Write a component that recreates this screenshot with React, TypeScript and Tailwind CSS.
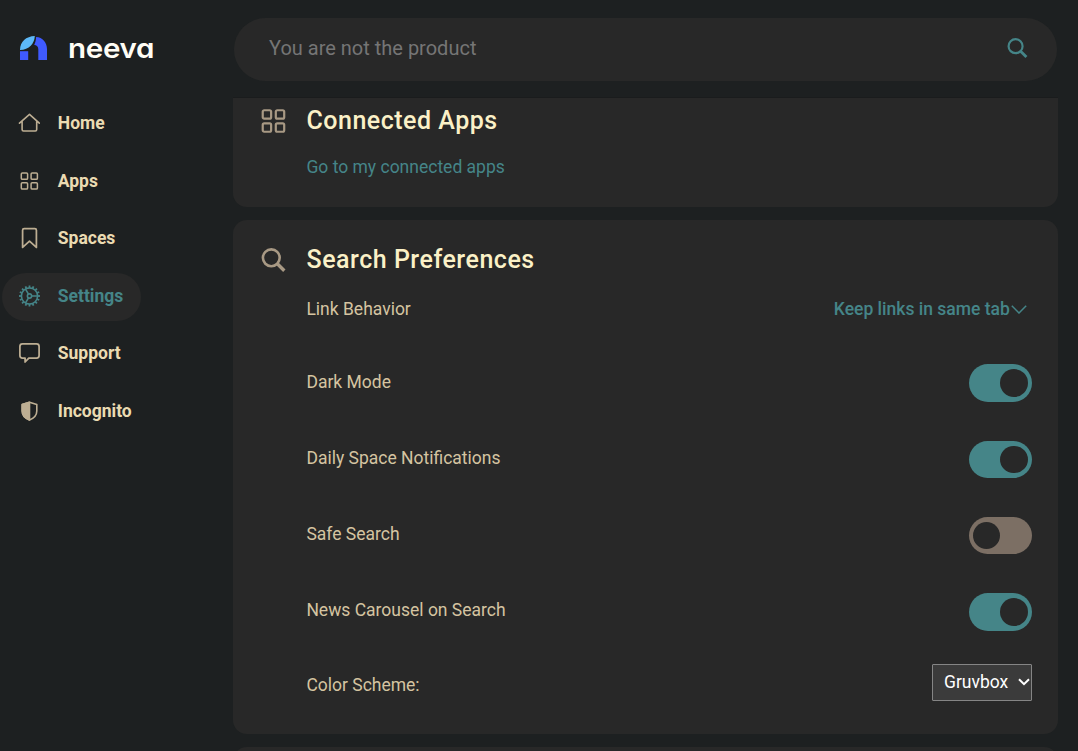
import React from "react";

type IconProps = { className?: string };

function Logo() {
  return (
    <svg className="h-6 w-[27px] shrink-0" viewBox="0 0 27 24" fill="none">
      <path d="M0 14C0 5.5 6 .4 14.8 0C14.5 7.5 9.2 14 0 14Z" fill="#5db9f8" />
      <path d="M0 15.2H8.2V24H0Z" fill="#3f5aff" />
      <path d="M16.1 .9C22.6 1.3 27 6.2 27 13V24H18.3V13.2C18.3 10.6 16.8 9 14.2 8.9C15.4 6.4 16 3.8 16.1 .9Z" fill="#3f5aff" />
    </svg>
  );
}

function HomeIcon() {
  return (
    <svg className="size-[22px]" viewBox="0 0 22 22" fill="none" stroke="currentColor" strokeWidth="1.6" strokeLinecap="round" strokeLinejoin="round">
      <path d="M1.5 11.2L11.5 2.3L21.3 11.2M4.1 9.4V17.6Q4.1 19 5.5 19H17.3Q18.7 19 18.7 17.6V9.4" />
    </svg>
  );
}

function GridIcon({ className, strokeWidth = 1.65 }: IconProps & { strokeWidth?: number }) {
  return (
    <svg className={className} viewBox="-.35 0 18 18" overflow="visible" fill="none" stroke="currentColor" strokeWidth={strokeWidth}>
      <rect x=".95" y=".95" width="6.3" height="6.3" rx="1.1" />
      <rect x="10.75" y=".95" width="6.3" height="6.3" rx="1.1" />
      <rect x=".95" y="10.75" width="6.3" height="6.3" rx="1.1" />
      <rect x="10.75" y="10.75" width="6.3" height="6.3" rx="1.1" />
    </svg>
  );
}

function BookmarkIcon() {
  return (
    <svg className="size-[22px]" viewBox="0 0 22 22" fill="none" stroke="currentColor" strokeWidth="1.75" strokeLinejoin="round">
      <path d="M4.6 20.4V3.2Q4.6 1.6 6.2 1.6H16.8Q18.4 1.6 18.4 3.2V20.4L11.5 14.2Z" />
    </svg>
  );
}

function GearIcon() {
  const teeth = Array.from({ length: 16 }, (_, i) => i * 22.5);
  return (
    <svg className="size-[22px]" viewBox="-.5 0 22 22" fill="none" stroke="currentColor" strokeWidth="1.6">
      <circle cx="11" cy="11" r="8.1" />
      <circle cx="11" cy="11" r="2.1" />
      {teeth.map((a) => (
        <path key={a} d="M11 .5V2.6" strokeWidth="1.8" transform={`rotate(${a} 11 11)`} />
      ))}
      <path d="M13 11H19M10 9.2L7 4.1M10 12.8L7 17.9" />
    </svg>
  );
}

function ChatIcon() {
  return (
    <svg className="size-[22px]" viewBox="-.5 0 22 22" fill="none" stroke="currentColor" strokeWidth="1.75" strokeLinejoin="round">
      <path d="M4 1.9H18Q20.6 1.9 20.6 4.5V13.6Q20.6 16.2 18 16.2H10.3L6.6 20V16.2H4Q1.4 16.2 1.4 13.6V4.5Q1.4 1.9 4 1.9Z" />
    </svg>
  );
}

function ShieldIcon() {
  return (
    <svg className="size-[22px]" viewBox="-.5 0 22 22" fill="none" stroke="currentColor" strokeWidth="1.6" strokeLinejoin="round">
      <path d="M11 2.2L18.3 4.6V11C18.3 15.6 15.2 18.3 11 19.9C6.8 18.3 3.7 15.6 3.7 11V4.6Z" />
      <path d="M11 2.2L3.7 4.6V11C3.7 15.6 6.8 18.3 11 19.9Z" fill="currentColor" />
    </svg>
  );
}

function SearchIcon({ className }: IconProps) {
  return (
    <svg className={className} viewBox="-.5 0 24 24" overflow="visible" fill="none" stroke="currentColor">
      <circle cx="9.8" cy="9.8" r="8.4" strokeWidth="2.6" />
      <path d="M15.8 15.8L22.8 22.8" strokeWidth="3.4" />
    </svg>
  );
}

const nav = [
  { label: "Home", icon: <HomeIcon /> },
  { label: "Apps", icon: <GridIcon strokeWidth={1.5} className="mr-[2px] ml-[2px] size-[18px]" /> },
  { label: "Spaces", icon: <BookmarkIcon /> },
  { label: "Settings", icon: <GearIcon />, active: true },
  { label: "Support", icon: <ChatIcon /> },
  { label: "Incognito", icon: <ShieldIcon /> },
];

function Toggle({ on }: { on: boolean }) {
  return (
    <button
      role="switch"
      aria-checked={on}
      className={`flex h-[37.5px] w-[63px] items-center rounded-full ${on ? "justify-end bg-[#458588] pr-[4.2px]" : "justify-start bg-[#7c6f64] pl-[3.8px]"}`}
    >
      <span className="size-[27.5px] rounded-full bg-[#282828]" />
    </button>
  );
}

const toggles = [
  { label: "Dark Mode", on: true },
  { label: "Daily Space Notifications", on: true },
  { label: "Safe Search", on: false },
  { label: "News Carousel on Search", on: true },
];

export default function App() {
  return (
    <div className="flex h-[751px] w-[1078px] overflow-hidden bg-[#1d2021] font-['Roboto',sans-serif] text-[17.5px] text-[#d5c4a1]">
      <aside className="flex w-[233px] shrink-0 flex-col">
        <div className="flex h-[99.9px] shrink-0 items-start gap-[20.5px] pt-9 pl-5">
          <Logo />
          <span className="-mt-[6px] origin-left scale-x-[1.075] font-['Inter',sans-serif] text-[27.5px] leading-[36px] font-semibold tracking-[-0.3px] text-[#fffdf5] [font-feature-settings:'cv11']">neeva</span>
        </div>
        <nav className="flex flex-col items-start gap-[9.6px] pl-[2px]">
          {nav.map((n) => (
            <a
              key={n.label}
              className={`flex h-12 items-center gap-[17.8px] rounded-full pr-[17.4px] pb-[1.55px] pl-4 font-bold ${n.active ? "bg-[#282828] text-[#458588]" : "text-[#ebdbb2]"}`}
            >
              <span className={n.active ? "text-[#458588]" : "text-[#bdae93]"}>{n.icon}</span>
              {n.label}
            </a>
          ))}
        </nav>
      </aside>

      <main className="flex w-[825px] shrink-0 flex-col">
        <div className="h-[98px] shrink-0 border-b border-[#1a1c1d] px-px pt-[18px]">
          <div className="flex h-[63px] items-center justify-between rounded-full bg-[#282828] pr-[30px] pb-[3px] pl-[35px]">
            <span className="text-[20px] leading-6 text-[#757575]">You are not the product</span>
            <SearchIcon className="size-5 text-[#458588]" />
          </div>
        </div>

        <section className="flex h-[109px] shrink-0 flex-col rounded-b-[14px] bg-[#282828] pl-[28.4px]">
          <div className="flex h-[46.6px] items-center gap-[21.1px]">
            <GridIcon className="size-[24px] text-[#a89984]" />
            <h2 className="text-[25px] leading-8 font-medium tracking-[0.5px] text-[#fbf1c7]">Connected Apps</h2>
          </div>
          <a className="mt-[12.4px] ml-[45px] leading-5 text-[#458588]">Go to my connected apps</a>
        </section>

        <section className="mt-[13px] flex h-[514px] shrink-0 flex-col rounded-[14px] bg-[#282828] pr-[26px] pl-[28.4px]">
          <div className="mt-[19px] flex h-[42px] items-center gap-[21.1px]">
            <SearchIcon className="size-[24px] text-[#a89984]" />
            <h2 className="text-[25px] leading-8 font-medium tracking-[0.52px] text-[#fbf1c7]">Search Preferences</h2>
          </div>
          <div className="mt-[16px] flex h-6 items-center justify-between pl-[45px]">
            <span>Link Behavior</span>
            <span className="flex items-center gap-[1.6px] pr-[4.6px] font-medium text-[#458588]">
              Keep links in same tab
              <svg className="h-[9px] w-4" viewBox="0 0 16 9" fill="none" stroke="currentColor" strokeWidth="1.5">
                <path d="M.8 .8L8 8L15.2 .8" />
              </svg>
            </span>
          </div>
          <div className="mt-[24px] flex flex-col pl-[45px]">
            {toggles.map((t) => (
              <div key={t.label} className="flex h-[76.3px] items-center justify-between">
                <span className="-mt-[3px]">{t.label}</span>
                <Toggle on={t.on} />
              </div>
            ))}
          </div>
          <div className="mt-[13.8px] flex h-[37px] items-center justify-between pl-[45px]">
            <span className="mt-[6px]">Color Scheme:</span>
            <button className="flex h-[37px] w-[100px] items-center justify-between rounded-[1px] border border-[#858585] bg-[#3b3b3b] pr-[1.5px] pl-[11px] text-white">
              Gruvbox
              <svg className="h-[8px] w-[12px]" viewBox="0 0 12 8" fill="none" stroke="currentColor" strokeWidth="2">
                <path d="M1 1.2L6 6.2L11 1.2" />
              </svg>
            </button>
          </div>
        </section>
        <section className="mt-[13px] h-10 shrink-0 rounded-t-[14px] bg-[#282828]" />
      </main>
    </div>
  );
}
